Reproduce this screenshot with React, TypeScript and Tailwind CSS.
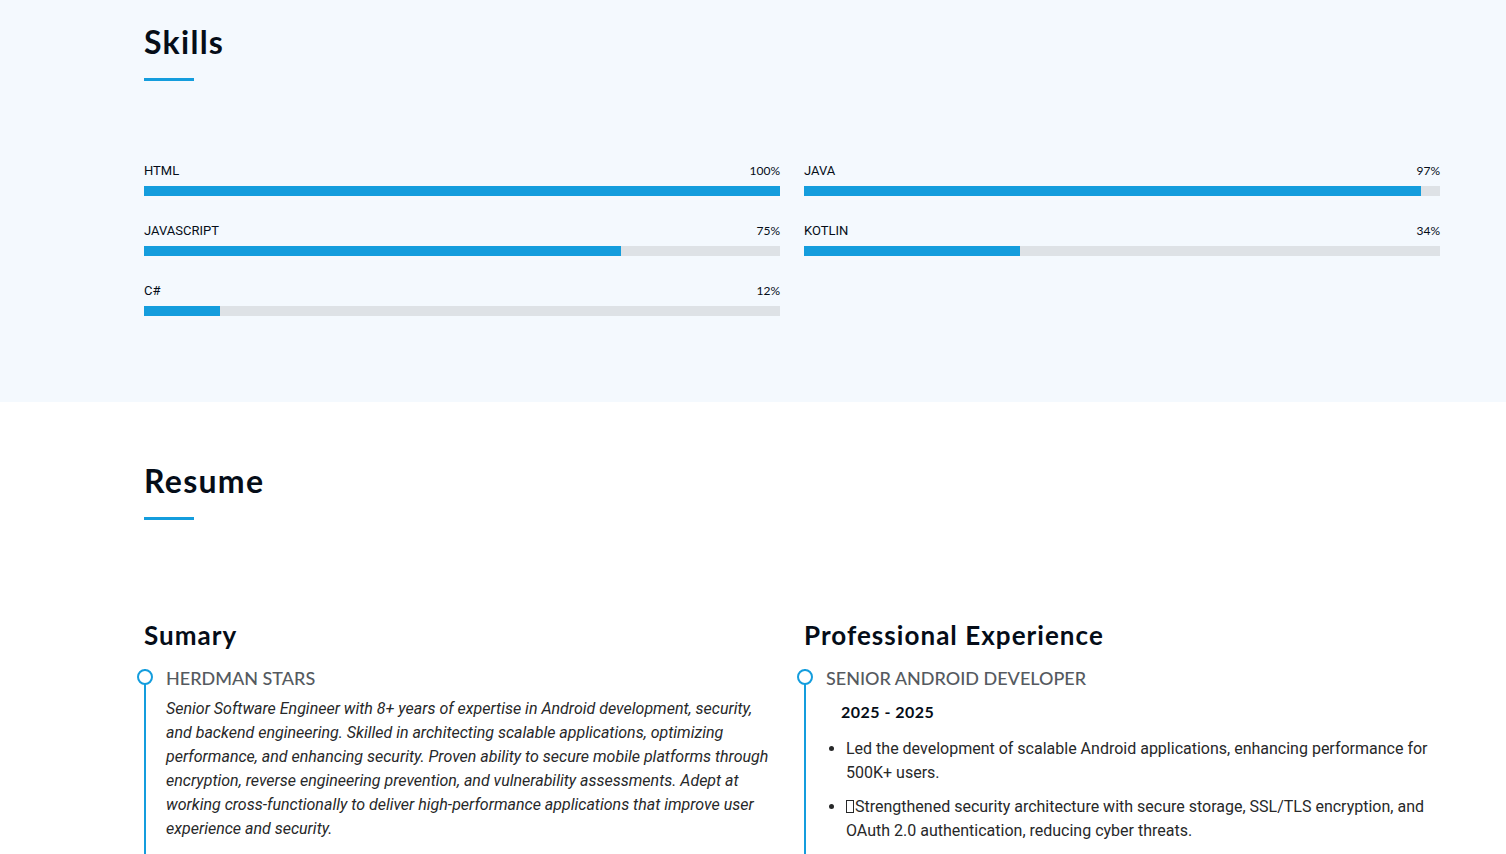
import React from "react";

const head = { fontFamily: '"Lato", "Noto Sans", sans-serif' };
const body = { fontFamily: 'Roboto, "Liberation Sans", sans-serif' };

const skillsLeft = [
  { name: "HTML", v: 100 },
  { name: "JAVASCRIPT", v: 75 },
  { name: "C#", v: 12 },
];
const skillsRight = [
  { name: "JAVA", v: 97 },
  { name: "KOTLIN", v: 34 },
];

function Skill({ name, v }: { name: string; v: number }) {
  return (
    <div className="mb-[26px]">
      <div className="flex justify-between items-center h-[18px] text-[13px] text-[#050d18]">
        <span style={body}>{name}</span>
        <span style={head} className="text-[12px]">{v}%</span>
      </div>
      <div className="mt-[6px] h-[10px] bg-[#dee2e6]">
        <div className="h-full bg-[#149ddd]" style={{ width: `${v}%` }} />
      </div>
    </div>
  );
}

function Title({ children }: { children: React.ReactNode }) {
  return (
    <div className="relative pb-[20px]">
      <h2 style={head} className="text-[32px] leading-[38px] font-bold tracking-[0.04em] text-[#050d18]">
        {children}
      </h2>
      <div className="absolute left-0 bottom-0 w-[50px] h-[3px] bg-[#149ddd]" />
    </div>
  );
}

function Item({ title, children }: { title: string; children: React.ReactNode }) {
  return (
    <div className="relative border-l-2 border-[#149ddd] pl-[20px] pb-[20px]">
      <div className="absolute left-[-9px] top-0 w-4 h-4 rounded-full bg-white border-2 border-[#149ddd]" />
      <h4 style={head} className="text-[18px] leading-[18px] font-medium uppercase text-[#555a60] mb-[10px]">
        {title}
      </h4>
      {children}
    </div>
  );
}

export default function App() {
  return (
    <div style={body} className="w-full bg-white">
      <section className="bg-[#f4f9fe] pt-[23px] h-[402px]">
        <div className="ml-[144px] w-[1296px]">
          <Title>Skills</Title>
          <div className="mt-[81px] grid grid-cols-2 gap-x-[24px]">
            <div>
              {skillsLeft.map((s) => (
                <Skill key={s.name} {...s} />
              ))}
            </div>
            <div>
              {skillsRight.map((s) => (
                <Skill key={s.name} {...s} />
              ))}
            </div>
          </div>
        </div>
      </section>
      <section className="pt-[60px] h-[452px] overflow-hidden">
        <div className="ml-[144px] w-[1296px]">
          <Title>Resume</Title>
          <div className="mt-[100px] grid grid-cols-2 gap-x-[24px]">
            <div>
              <h3 style={head} className="text-[26px] leading-[31px] font-bold tracking-[0.04em] text-[#050d18] mb-[18px]">
                Sumary
              </h3>
              <Item title="HERDMAN STARS">
                <p className="italic text-[16px] leading-[24px] text-[#272829]">
                  Senior Software Engineer with 8+ years of expertise in Android development, security,
                  and backend engineering. Skilled in architecting scalable applications, optimizing
                  performance, and enhancing security. Proven ability to secure mobile platforms through
                  encryption, reverse engineering prevention, and vulnerability assessments. Adept at
                  working cross-functionally to deliver high-performance applications that improve user
                  experience and security.
                </p>
              </Item>
            </div>
            <div>
              <h3 style={head} className="text-[26px] leading-[31px] font-bold tracking-[0.04em] text-[#050d18] mb-[18px]">
                Professional Experience
              </h3>
              <Item title="SENIOR ANDROID DEVELOPER">
                <h5 style={head} className="inline-block text-[16px] leading-[19px] font-bold tracking-[0.03em] text-[#050d18] px-[15px] py-[5px] mb-[11px]">
                  2025 - 2025
                </h5>
                <ul className="list-disc pl-[20px] text-[16px] leading-[24px] text-[#272829]">
                  <li className="pb-[10px]">
                    Led the development of scalable Android applications, enhancing performance for 500K+ users.
                  </li>
                  <li className="pb-[10px]">
                    <span className="inline-block w-[8px] h-[13px] border border-[#272829] mr-[1px] align-[-1px]" />
                    Strengthened security architecture with secure storage, SSL/TLS encryption, and OAuth 2.0
                    authentication, reducing cyber threats.
                  </li>
                </ul>
              </Item>
            </div>
          </div>
        </div>
      </section>
    </div>
  );
}
